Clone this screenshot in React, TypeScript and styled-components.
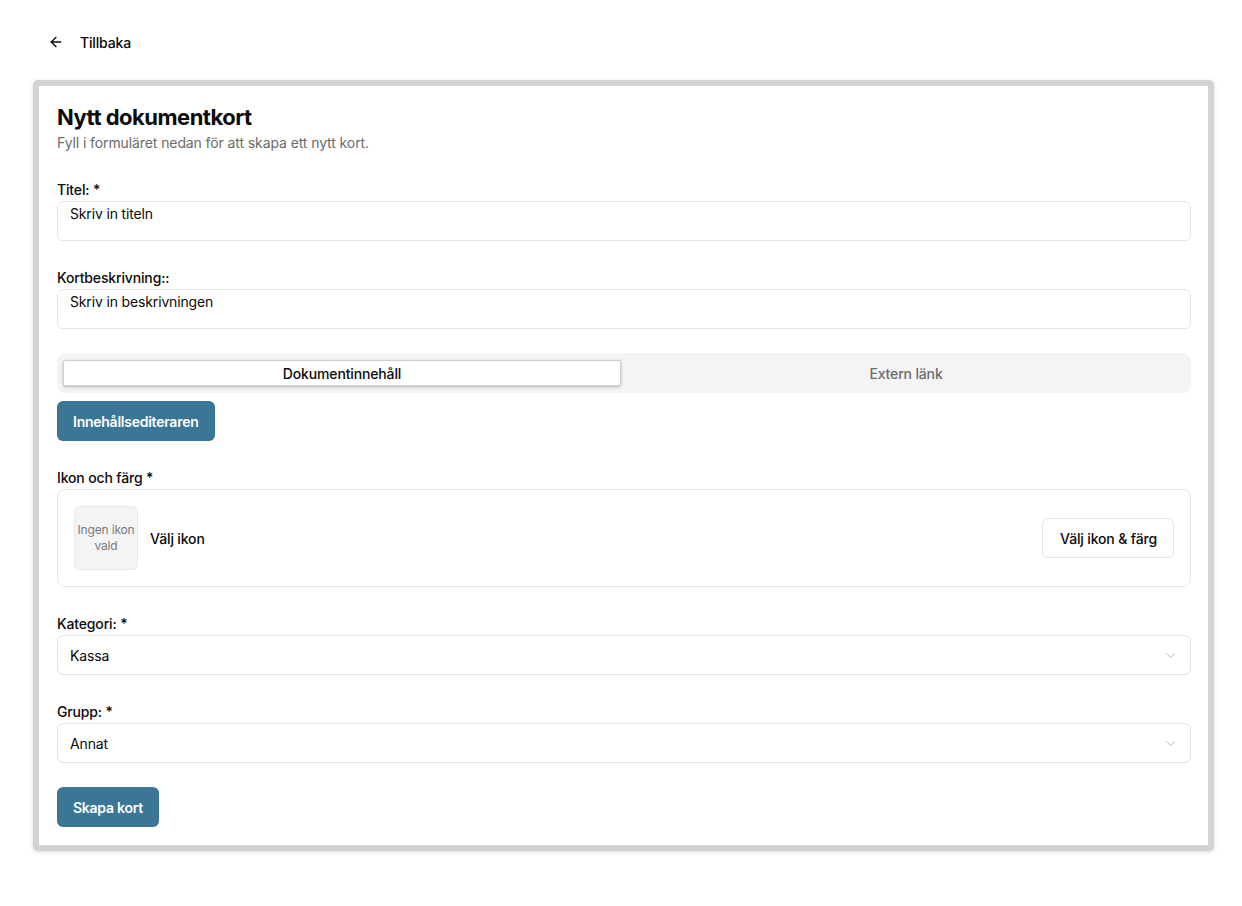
import { type FC } from "react";
import styled, { createGlobalStyle } from "styled-components";
import { ArrowLeft, ChevronDown } from "lucide-react";

const GlobalStyle = createGlobalStyle`
  html, body {
    margin: 0;
    padding: 0;
    background: #ffffff;
    font-family: Inter, "Noto Sans", sans-serif;
    color: #0a0a0a;
    letter-spacing: -0.15px;
  }
  * {
    box-sizing: border-box;
  }
`;

const ACCENT = "#3b7696";

const StyledPage = styled.div`
  display: flex;
  flex-direction: column;
  gap: 20px;
  padding: 24px 28px 40px 33px;
`;

const StyledBackButton = styled.button`
  align-self: flex-start;
  align-items: center;
  background: transparent;
  border: none;
  border-radius: 6px;
  color: #0a0a0a;
  cursor: pointer;
  display: flex;
  font-family: inherit;
  font-size: 14px;
  font-weight: 500;
  gap: 16px;
  height: 36px;
  letter-spacing: inherit;
  padding: 0 14px 0 15px;
`;

const StyledCard = styled.div`
  background: #ffffff;
  border: 6px solid #d3d3d3;
  border-radius: 5px;
  box-shadow: 0 1px 4px rgba(0, 0, 0, 0.15);
  padding: 15px 17px 18px 18px;
`;

const StyledHeader = styled.div`
  display: flex;
  flex-direction: column;
`;

const StyledTitle = styled.h1`
  font-size: 22px;
  font-weight: 700;
  letter-spacing: -0.5px;
  line-height: 32px;
  margin: 0;
`;

const StyledSubtitle = styled.p`
  color: #6b6b6b;
  font-size: 14px;
  letter-spacing: -0.1px;
  line-height: 20px;
  margin: 0;
`;

const StyledForm = styled.form`
  display: flex;
  flex-direction: column;
  gap: 24px;
  margin-top: 24px;
`;

const StyledField = styled.div`
  display: flex;
  flex-direction: column;
`;

const StyledLabel = styled.label`
  font-size: 14px;
  font-weight: 500;
  line-height: 20px;
  margin: 3px 0 1px;
`;

const StyledTextArea = styled.textarea`
  border: 1px solid #e4e4e7;
  border-radius: 6px;
  color: #0a0a0a;
  font-family: inherit;
  font-size: 14px;
  height: 40px;
  letter-spacing: inherit;
  line-height: 20px;
  outline: none;
  overflow: hidden;
  padding: 2px 12px;
  resize: none;
  width: 100%;
`;

const StyledTabsSection = styled.div`
  display: flex;
  flex-direction: column;
  gap: 8px;
`;

const StyledTabList = styled.div`
  background: #f4f4f5;
  border-radius: 8px;
  display: grid;
  gap: 6px;
  grid-template-columns: 1fr 1fr;
  height: 40px;
  padding: 7px 6px;
`;

const StyledTab = styled.button<{ $active: boolean }>`
  background: ${({ $active }) => ($active ? "#ffffff" : "transparent")};
  border: ${({ $active }) =>
    $active ? "1px solid #cfcfcf" : "1px solid transparent"};
  border-radius: 2px;
  box-shadow: ${({ $active }) =>
    $active ? "0 1px 3px rgba(0, 0, 0, 0.25)" : "none"};
  color: ${({ $active }) => ($active ? "#0a0a0a" : "#6b6b6b")};
  cursor: pointer;
  font-family: inherit;
  font-size: 14px;
  font-weight: 500;
  letter-spacing: inherit;
  padding: 0;
`;

const StyledPrimaryButton = styled.button`
  align-self: flex-start;
  background: ${ACCENT};
  border: none;
  border-radius: 6px;
  color: #ffffff;
  cursor: pointer;
  font-family: inherit;
  font-size: 14px;
  font-weight: 600;
  height: 40px;
  letter-spacing: -0.25px;
  padding: 0 16px;
`;

const StyledIconBox = styled.div`
  align-items: center;
  border: 1px solid #e4e4e7;
  border-radius: 8px;
  display: flex;
  gap: 12px;
  padding: 16px;
`;

const StyledIconPreview = styled.div`
  align-items: center;
  background: #f4f4f5;
  border: 1px solid #e8e8ea;
  border-radius: 6px;
  color: #7a7a7a;
  display: flex;
  flex-shrink: 0;
  font-size: 12px;
  height: 64px;
  justify-content: center;
  line-height: 16px;
  text-align: center;
  width: 64px;
`;

const StyledIconLabel = styled.span`
  flex: 1;
  font-size: 14px;
  font-weight: 500;
`;

const StyledOutlineButton = styled.button`
  background: #ffffff;
  border: 1px solid #e4e4e7;
  border-radius: 6px;
  color: #0a0a0a;
  cursor: pointer;
  font-family: inherit;
  font-size: 14px;
  font-weight: 500;
  height: 40px;
  letter-spacing: inherit;
  padding: 0 16px 0 17px;
`;

const StyledSelect = styled.button`
  align-items: center;
  background: #ffffff;
  border: 1px solid #e4e4e7;
  border-radius: 6px;
  color: #0a0a0a;
  display: flex;
  font-family: inherit;
  font-size: 14px;
  height: 40px;
  justify-content: space-between;
  letter-spacing: inherit;
  padding: 0 12px;
  text-align: left;
  width: 100%;

  & > svg {
    color: #b5b5b5;
  }
`;

interface SelectFieldProps {
  label: string;
  value: string;
}

const SelectField: FC<SelectFieldProps> = ({ label, value }) => (
  <StyledField>
    <StyledLabel>{label}</StyledLabel>
    <StyledSelect type="button">
      <span>{value}</span>
      <ChevronDown size={15} strokeWidth={1.5} />
    </StyledSelect>
  </StyledField>
);

interface TextFieldProps {
  label: string;
  value: string;
}

const TextField: FC<TextFieldProps> = ({ label, value }) => (
  <StyledField>
    <StyledLabel>{label}</StyledLabel>
    <StyledTextArea rows={1} defaultValue={value} />
  </StyledField>
);

export default function App() {
  return (
    <>
      <GlobalStyle />
      <StyledPage>
        <StyledBackButton type="button">
          <ArrowLeft size={16} strokeWidth={2} />
          Tillbaka
        </StyledBackButton>

        <StyledCard>
          <StyledHeader>
            <StyledTitle>Nytt dokumentkort</StyledTitle>
            <StyledSubtitle>
              Fyll i formuläret nedan för att skapa ett nytt kort.
            </StyledSubtitle>
          </StyledHeader>

          <StyledForm onSubmit={(e) => e.preventDefault()}>
            <TextField label="Titel: *" value="Skriv in titeln" />
            <TextField
              label="Kortbeskrivning::"
              value="Skriv in beskrivningen"
            />

            <StyledTabsSection>
              <StyledTabList role="tablist">
                <StyledTab $active type="button" role="tab">
                  Dokumentinnehåll
                </StyledTab>
                <StyledTab $active={false} type="button" role="tab">
                  Extern länk
                </StyledTab>
              </StyledTabList>
              <StyledPrimaryButton type="button">
                Innehållsediteraren
              </StyledPrimaryButton>
            </StyledTabsSection>

            <StyledField>
              <StyledLabel>Ikon och färg *</StyledLabel>
              <StyledIconBox>
                <StyledIconPreview>
                  Ingen ikon
                  <br />
                  vald
                </StyledIconPreview>
                <StyledIconLabel>Välj ikon</StyledIconLabel>
                <StyledOutlineButton type="button">
                  Välj ikon &amp; färg
                </StyledOutlineButton>
              </StyledIconBox>
            </StyledField>

            <SelectField label="Kategori: *" value="Kassa" />
            <SelectField label="Grupp: *" value="Annat" />

            <StyledPrimaryButton type="submit">Skapa kort</StyledPrimaryButton>
          </StyledForm>
        </StyledCard>
      </StyledPage>
    </>
  );
}
